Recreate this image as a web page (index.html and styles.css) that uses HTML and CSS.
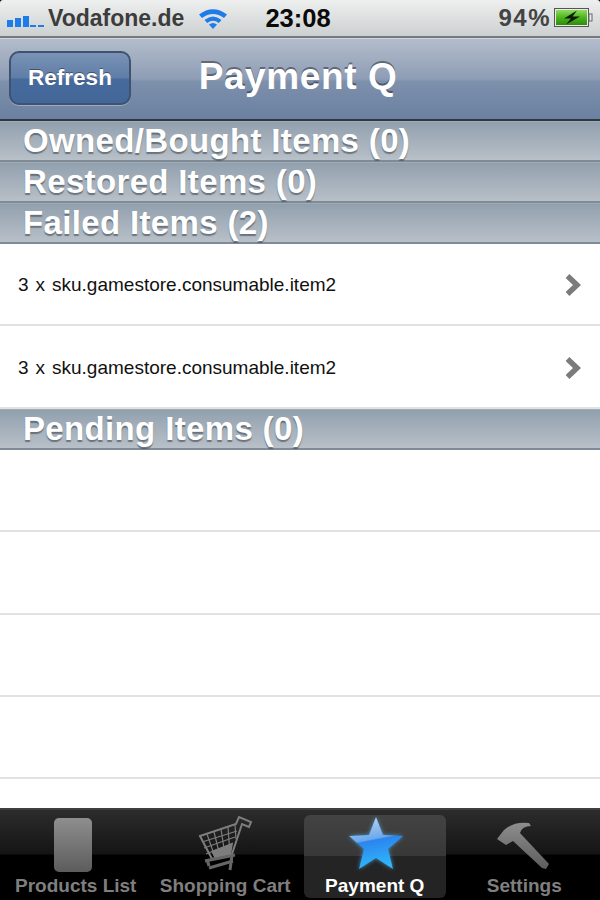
FILE: index.html
```html
<!DOCTYPE html>
<html lang="en">
<head>
    <meta charset="UTF-8">
    <meta name="viewport" content="width=device-width, initial-scale=1.0">
    <title>Payment Q</title>
    <link rel="stylesheet" href="styles.css">
</head>
<body>
    <div class="phone">
        <div class="status-bar">
            <div class="status-left">
                <svg class="signal" width="37" height="12" viewBox="0 0 37 12">
                    <rect x="0" y="5" width="6" height="7" fill="#1e7bea"/>
                    <rect x="8" y="3" width="6" height="9" fill="#1e7bea"/>
                    <rect x="16" y="1" width="6" height="11" fill="#1e7bea"/>
                    <rect x="23" y="10" width="6" height="2" fill="#1e7bea"/>
                    <rect x="31" y="10" width="6" height="2" fill="#1e7bea"/>
                </svg>
                <span class="carrier">Vodafone.de</span>
                <svg class="wifi" width="30" height="22" viewBox="0 0 30 22">
                    <path d="M1 7.5 Q15 -3 29 7.5 L26 11 Q15 3 4 11 Z" fill="#1e7bea"/>
                    <path d="M6.5 13 Q15 6 23.5 13 L20.8 16 Q15 11.5 9.2 16 Z" fill="#1e7bea"/>
                    <path d="M11 17.5 Q15 14.5 19 17.5 L15 22 Z" fill="#1e7bea"/>
                </svg>
            </div>
            <div class="clock">23:08</div>
            <div class="status-right">
                <span class="battery-text">94%</span>
                <svg class="battery" width="39" height="20" viewBox="0 0 39 20">
                    <defs>
                        <linearGradient id="batt" x1="0" y1="0" x2="0" y2="1">
                            <stop offset="0" stop-color="#8fdc5e"/>
                            <stop offset="0.5" stop-color="#4cb51c"/>
                            <stop offset="1" stop-color="#2d8c0c"/>
                        </linearGradient>
                    </defs>
                    <rect x="0.5" y="0.5" width="34" height="18" fill="#e8ebe8" stroke="#555"/>
                    <rect x="2" y="2" width="31" height="15" fill="url(#batt)"/>
                    <rect x="35" y="6" width="3" height="7" fill="#e8ebe8" stroke="#666"/>
                    <path d="M23 2.5 L10 10.5 L17 10.5 L12 16.5 L26 8.5 L18.5 8.5 Z" fill="#0c1a06"/>
                </svg>
            </div>
        </div>

        <header class="nav-bar">
            <button class="refresh-button">Refresh</button>
            <h1 class="nav-title">Payment Q</h1>
        </header>

        <main class="table">
            <div class="section-header">Owned/Bought Items (0)</div>
            <div class="section-header">Restored Items (0)</div>
            <div class="section-header">Failed Items (2)</div>
            <div class="row">
                <span class="row-text">3 x sku.gamestore.consumable.item2</span>
                <svg class="chevron" width="18" height="24" viewBox="0 0 18 24">
                    <path d="M3.5 3 L13 12 L3.5 21" fill="none" stroke="#7b7b7b" stroke-width="5.5"/>
                </svg>
            </div>
            <div class="row">
                <span class="row-text">3 x sku.gamestore.consumable.item2</span>
                <svg class="chevron" width="18" height="24" viewBox="0 0 18 24">
                    <path d="M3.5 3 L13 12 L3.5 21" fill="none" stroke="#7b7b7b" stroke-width="5.5"/>
                </svg>
            </div>
            <div class="section-header">Pending Items (0)</div>
            <div class="row"></div>
            <div class="row"></div>
            <div class="row"></div>
            <div class="row"></div>
        </main>

        <nav class="tab-bar">
            <div class="tab">
                <svg class="tab-icon" width="60" height="56" viewBox="0 0 60 56">
                    <defs>
                        <linearGradient id="grey" x1="0" y1="0" x2="0" y2="1">
                            <stop offset="0" stop-color="#8e8e8e"/>
                            <stop offset="1" stop-color="#5c5c5c"/>
                        </linearGradient>
                    </defs>
                    <rect x="8" y="3" width="38" height="54" rx="5" fill="url(#grey)"/>
                </svg>
                <span class="tab-label">Products List</span>
            </div>
            <div class="tab">
                <svg class="tab-icon" width="60" height="56" viewBox="0 0 60 56">
                    <g fill="none" stroke="#7d7d7d" stroke-width="1.2">
                        <path d="M5 21 L41 9 L44 2 L56 7 L54 12 L47 9 L37 39 L17 44 Z" stroke-width="2"/>
                        <path d="M12 19 L20 42 M19 17 L25 41 M26 14 L30 40 M33 12 L35 39 M40 10 L41 24"/>
                        <path d="M7 27 L42 16 M9 33 L40 22 M11 39 L38 28"/>
                    </g>
                    <path d="M16 36 L38 28 L36 40 L20 44 Z" fill="#7d7d7d"/>
                    <path d="M10 46 L40 40 M14 53 L38 46" stroke="#666" stroke-width="3" fill="none"/>
                    <path d="M12 44 L14 51 M37 40 L35 55" stroke="#666" stroke-width="3" fill="none"/>
                </svg>
                <span class="tab-label">Shopping Cart</span>
            </div>
            <div class="tab tab-active">
                <svg class="tab-icon star" width="60" height="56" viewBox="0 0 60 56">
                    <defs>
                        <linearGradient id="star" x1="0.1" y1="0" x2="0.3" y2="1">
                            <stop offset="0" stop-color="#c4d8f2"/>
                            <stop offset="0.47" stop-color="#6aa8ec"/>
                            <stop offset="0.5" stop-color="#2b85ee"/>
                            <stop offset="1" stop-color="#2fb6fb"/>
                        </linearGradient>
                    </defs>
                    <path d="M31 2 L38 20 L58 21 L43 34 L48 54 L31 43 L14 54 L19 34 L4 21 L24 20 Z" fill="url(#star)"/>
                </svg>
                <span class="tab-label">Payment Q</span>
            </div>
            <div class="tab">
                <svg class="tab-icon" width="60" height="56" viewBox="0 0 60 56">
                    <path d="M3 24 L10 15 Q20 6 35 8 L37 11 Q28 11 26 18 L55 49 L52 54 L48 53 L19 26 L12 30 Z" fill="url(#grey)"/>
                </svg>
                <span class="tab-label">Settings</span>
            </div>
        </nav>
    </div>
</body>
</html>
```

FILE: styles.css
```css
* {
    margin: 0;
    padding: 0;
    box-sizing: border-box;
}

body {
    font-family: "Liberation Sans", Arial, sans-serif;
    background: #fff;
}

.phone {
    width: 600px;
    height: 900px;
    display: flex;
    flex-direction: column;
    overflow: hidden;
    background: #000;
}

.status-bar {
    height: 38px;
    flex: none;
    display: grid;
    grid-template-columns: 1fr auto 1fr;
    align-items: center;
    padding: 0 7px;
    background: linear-gradient(#eef0f0, #cdd0d0);
    border-bottom: 2px solid #77797a;
    border-radius: 3px 3px 0 0;
}

.status-left {
    display: flex;
    align-items: center;
}

.signal {
    margin-top: 6px;
}

.carrier {
    font-size: 23px;
    font-weight: bold;
    color: #3c3c3c;
    margin-left: 4px;
    margin-right: 14px;
}

.clock {
    font-size: 25.5px;
    font-weight: bold;
    color: #0a0a0a;
    margin-right: 4px;
}

.status-right {
    display: flex;
    align-items: center;
    justify-content: flex-end;
    gap: 3px;
}

.battery-text {
    font-size: 24px;
    font-weight: bold;
    color: #444;
    letter-spacing: 1.5px;
}

.nav-bar {
    height: 83px;
    flex: none;
    position: relative;
    display: flex;
    align-items: center;
    justify-content: center;
    padding-bottom: 4px;
    padding-right: 4px;
    background: linear-gradient(#b3bccb 0%, #8e9db5 50%, #7d90ac 53%, #6b81a1 100%);
    border-top: 1px solid #cdd4dd;
    border-bottom: 2px solid #2e3642;
}

.refresh-button {
    position: absolute;
    left: 9px;
    top: 12px;
    width: 122px;
    height: 54px;
    font-family: inherit;
    font-size: 22.5px;
    font-weight: bold;
    color: #fff;
    border: 2px solid #3d5370;
    border-radius: 10px;
    background: linear-gradient(#7a93b6 0%, #5f7da7 50%, #466a9b 52%, #426798 100%);
    box-shadow: 0 1px 0 rgba(255, 255, 255, 0.3);
    text-shadow: 0 -1px 0 rgba(0, 0, 0, 0.4);
}

.nav-title {
    font-size: 37px;
    font-weight: bold;
    color: #fff;
    letter-spacing: 0.6px;
    text-shadow: 0 -2px 0 rgba(0, 0, 0, 0.4);
}

.table {
    flex: 1;
    overflow: hidden;
    background: #fff;
}

.section-header {
    height: 41px;
    padding-left: 23px;
    font-size: 33px;
    line-height: 38px;
    font-weight: bold;
    color: #fff;
    letter-spacing: 0.35px;
    background: linear-gradient(#92a0ae, #b8c0c8);
    border-top: 1px solid #a0abb6;
    border-bottom: 2px solid #7f8c98;
    text-shadow: 0 2px 1px rgba(60, 70, 80, 0.6);
}

.row {
    height: 82.4px;
    display: flex;
    align-items: center;
    justify-content: space-between;
    padding: 2px 18px 0;
    border-bottom: 2px solid #e2e2e2;
}

.row-text {
    font-size: 19px;
    word-spacing: 1.7px;
    color: #111;
}

.chevron {
    flex: none;
}

.tab-bar {
    height: 92px;
    flex: none;
    display: grid;
    grid-template-columns: repeat(4, 1fr);
    padding: 5px 5px 4px;
    gap: 8px;
    background: linear-gradient(#2c2c2c 0%, #141414 49%, #000 50%, #000 100%);
    border-top: 2px solid #3f3f3f;
}

.tab {
    display: flex;
    flex-direction: column;
    align-items: center;
    border-radius: 6px;
}

.tab-active {
    background: linear-gradient(#434343 0%, #383838 49%, #242424 50%, #242424 100%);
}

.tab-icon {
    overflow: visible;
}

.star {
    filter: drop-shadow(0 0 2px rgba(80, 190, 255, 0.7));
}

.tab-label {
    font-size: 19px;
    font-weight: bold;
    color: #7f7f7f;
    white-space: nowrap;
    line-height: 24px;
    margin-top: 3px;
}

.tab-active .tab-label {
    color: #fff;
}
```
